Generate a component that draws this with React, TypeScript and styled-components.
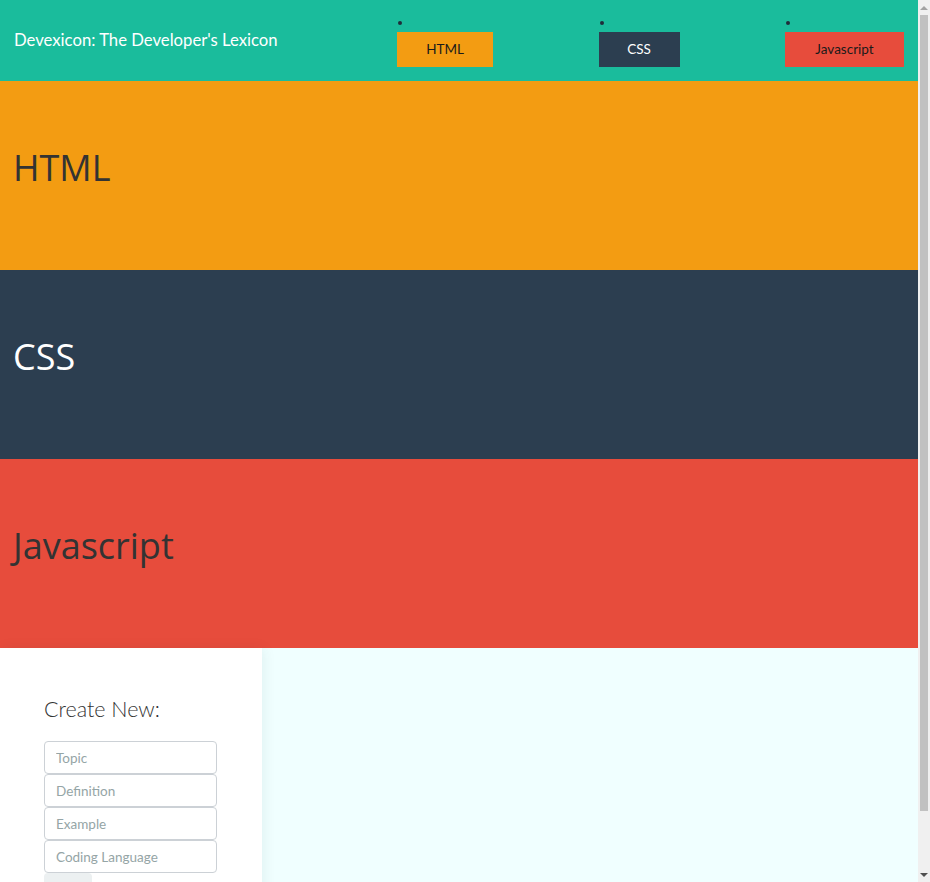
import React from 'react';
import styled, { createGlobalStyle } from 'styled-components';

interface Topic {
  id: string;
  label: string;
  bg: string;
  fg: string;
  navFg: string;
  navWidth: number;
}

const topics: Topic[] = [
  { id: 'html', label: 'HTML', bg: '#f39c12', fg: '#333333', navFg: '#1a1a1a', navWidth: 96 },
  { id: 'css', label: 'CSS', bg: '#2c3e50', fg: '#ffffff', navFg: '#ffffff', navWidth: 81 },
  { id: 'js', label: 'Javascript', bg: '#e74c3c', fg: '#333333', navFg: '#1a1a1a', navWidth: 119 },
];

const fields = ['Topic', 'Definition', 'Example', 'Coding Language'];

const GlobalStyle = createGlobalStyle`
  html, body {
    margin: 0;
    padding: 0;
  }
  body {
    font-family: Lato, "Open Sans", sans-serif;
    color: #333;
  }
  * {
    box-sizing: border-box;
  }
`;

const Page = styled.div`
  margin-right: 12px;
`;

const ScrollTrack = styled.div`
  position: fixed;
  top: 0;
  right: 0;
  bottom: 0;
  width: 12px;
  display: flex;
  flex-direction: column;
  align-items: center;
  background-color: #f0f0f0;
`;

const ScrollArrow = styled.div<{ $down?: boolean }>`
  flex-shrink: 0;
  height: 15px;
  width: 100%;
  display: flex;
  align-items: center;
  justify-content: center;

  &::after {
    content: '';
    border-left: 4px solid transparent;
    border-right: 4px solid transparent;
    ${p => (p.$down ? 'border-top: 4px solid #505050;' : 'border-bottom: 4px solid #a3a3a3;')}
  }
`;

const ScrollThumb = styled.div`
  width: 8px;
  height: 796px;
  background-color: #c1c1c1;
`;

const ScrollRest = styled.div`
  flex: 1;
`;

const Header = styled.header`
  display: flex;
  align-items: center;
  justify-content: space-between;
  height: 81px;
  padding: 0 14px;
  background-color: #1abc9c;
`;

const Title = styled.div`
  font-family: Lato, sans-serif;
  font-size: 16.7px;
  color: #fff;
  margin-top: -2px;
`;

const NavList = styled.ul`
  display: flex;
  justify-content: space-between;
  width: 507px;
  margin: 0;
  padding: 0;
  list-style: none;
`;

const NavItem = styled.li`
  display: flex;
  flex-direction: column;

  &::before {
    content: '';
    display: block;
    width: 4px;
    height: 4px;
    margin: 7px 0 7px 1px;
    border-radius: 50%;
    background-color: #1f2d3a;
  }
`;

const NavLink = styled.a<{ $bg: string; $fg: string; $w: number }>`
  display: block;
  width: ${p => p.$w}px;
  height: 35px;
  line-height: 35px;
  text-align: center;
  font-family: Lato, sans-serif;
  font-size: 13.5px;
  text-decoration: none;
  background-color: ${p => p.$bg};
  color: ${p => p.$fg};
`;

const Section = styled.section<{ $bg: string; $fg: string }>`
  height: 189px;
  padding: 62px 13px 0;
  background-color: ${p => p.$bg};
  color: ${p => p.$fg};
`;

const SectionTitle = styled.h1`
  margin: 0;
  font-family: "Open Sans", sans-serif;
  font-size: 36px;
  font-weight: 400;
`;

const Bottom = styled.div`
  display: flex;
  min-height: 296px;
`;

const Sidebar = styled.aside`
  width: 262px;
  flex-shrink: 0;
  padding: 48px 0 30px 44px;
  background-color: #fff;
  box-shadow: 2px 0 12px rgba(0, 60, 60, 0.07);
  position: relative;
  z-index: 1;
`;

const SidebarTitle = styled.h2`
  margin: 0 0 19px;
  font-family: Lato, sans-serif;
  font-size: 21.5px;
  font-weight: 300;
  color: #333;
`;

const Form = styled.form`
  display: flex;
  flex-direction: column;
  width: 173px;
`;

const Field = styled.input`
  height: 33px;
  width: 100%;
  padding: 0 11px;
  border: 1px solid #ccd1d6;
  border-radius: 4px;
  font-family: Lato, sans-serif;
  font-size: 13.5px;
  color: #333;
  background: #fff;

  &::placeholder {
    color: #95a5a6;
  }
`;

const AddButton = styled.button`
  align-self: flex-start;
  width: 48px;
  padding: 18px 0 12px;
  line-height: 17px;
  border: none;
  border-radius: 4px;
  background-color: #ecf0f1;
  font-family: Lato, sans-serif;
  font-size: 14px;
  color: #333;
`;

const Main = styled.main`
  flex: 1;
  background-color: #f0ffff;
`;

const App: React.FC = () => {
  return (
    <>
      <GlobalStyle />
      <Page>
        <Header>
          <Title>Devexicon: The Developer's Lexicon</Title>
          <nav>
            <NavList>
              {topics.map(t => (
                <NavItem key={t.id}>
                  <NavLink href={`#${t.id}`} $bg={t.bg} $fg={t.navFg} $w={t.navWidth}>
                    {t.label}
                  </NavLink>
                </NavItem>
              ))}
            </NavList>
          </nav>
        </Header>
        {topics.map(t => (
          <Section key={t.id} id={t.id} $bg={t.bg} $fg={t.fg}>
            <SectionTitle>{t.label}</SectionTitle>
          </Section>
        ))}
        <Bottom>
          <Sidebar>
            <SidebarTitle>Create New:</SidebarTitle>
            <Form onSubmit={e => e.preventDefault()}>
              {fields.map(f => (
                <Field key={f} placeholder={f} />
              ))}
              <AddButton type="submit">Add</AddButton>
            </Form>
          </Sidebar>
          <Main />
        </Bottom>
      </Page>
      <ScrollTrack aria-hidden>
        <ScrollArrow />
        <ScrollThumb />
        <ScrollRest />
        <ScrollArrow $down />
      </ScrollTrack>
    </>
  );
};

export default App;
